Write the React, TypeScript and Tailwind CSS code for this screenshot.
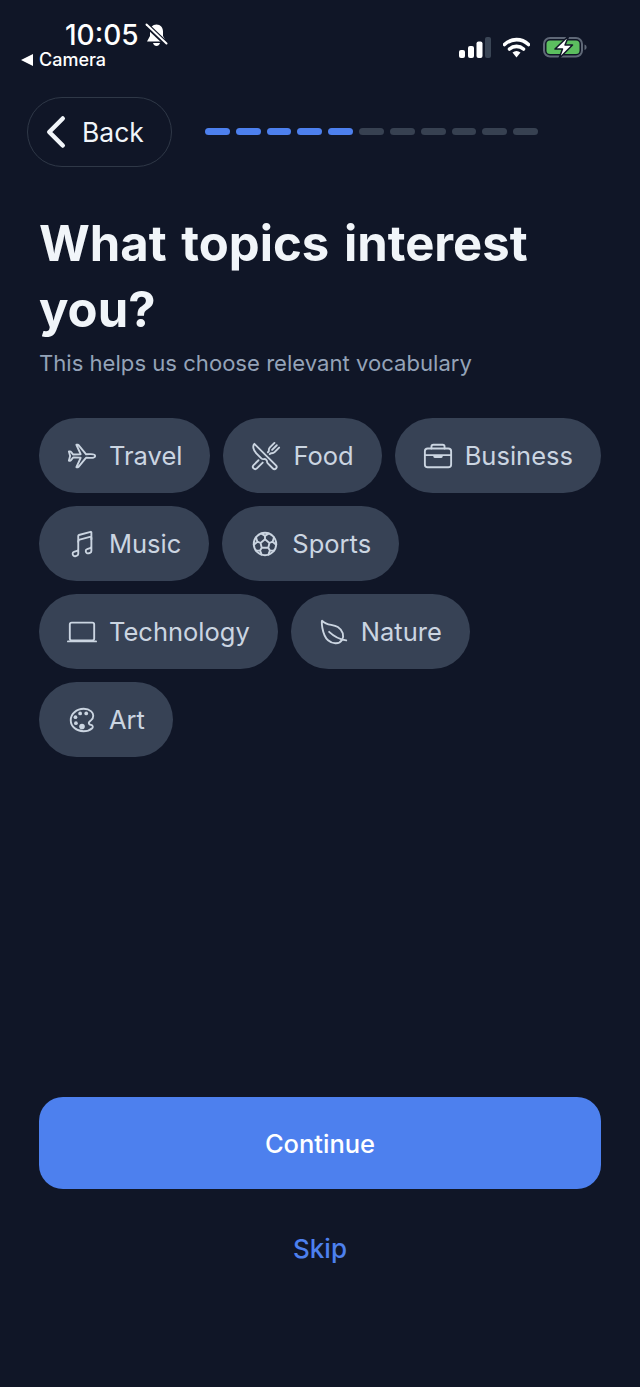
import type { ComponentType } from "react";
import {
  IoAirplaneOutline,
  IoBriefcaseOutline,
  IoChevronBack,
  IoColorPaletteOutline,
  IoFootballOutline,
  IoLaptopOutline,
  IoLeafOutline,
  IoMusicalNotesOutline,
  IoRestaurantOutline,
} from "react-icons/io5";

type Topic = { label: string; icon: ComponentType<{ className?: string }> };

const topics: Topic[] = [
  { label: "Travel", icon: IoAirplaneOutline },
  { label: "Food", icon: IoRestaurantOutline },
  { label: "Business", icon: IoBriefcaseOutline },
  { label: "Music", icon: IoMusicalNotesOutline },
  { label: "Sports", icon: IoFootballOutline },
  { label: "Technology", icon: IoLaptopOutline },
  { label: "Nature", icon: IoLeafOutline },
  { label: "Art", icon: IoColorPaletteOutline },
];

function StatusBar() {
  return (
    <div className="flex h-[97px] items-start justify-between pl-[21px] pr-[53px] pt-[19px]">
      <div className="flex flex-col">
        <div className="flex items-center pl-[44px]">
          <span className="text-[28px] font-medium leading-[32px] text-white">10:05</span>
          <svg className="ml-[6px]" width="23" height="24" viewBox="0 0 23 24" fill="none">
            <path
              d="M11.500 1.500C7.500 1.500 5 4.500 5 8.500V13L2 18.500H21L18 13V8.500C18 4.500 15.500 1.500 11.500 1.500Z"
              fill="#fff"
            />
            <path d="M8 20C8.500 22 10 23 11.500 23C13 23 14.500 22 15 20Z" fill="#fff" />
            <path d="M1 1.500L22 21.500" stroke="#101627" strokeWidth="5" />
            <path d="M1.500 1.500L21.500 20.500" stroke="#fff" strokeWidth="2" strokeLinecap="round" />
          </svg>
        </div>
        <div className="flex items-center">
          <span className="h-0 w-0 border-y-[6px] border-r-[12px] border-y-transparent border-r-white" />
          <span className="ml-[6px] text-[18px] font-medium leading-[18px] text-white">Camera</span>
        </div>
      </div>
      <div className="mt-[16px] flex items-center">
        <svg width="32" height="21" viewBox="0 0 32 21" fill="none">
          <rect x="0" y="13" width="6" height="8" rx="2" fill="#fff" />
          <rect x="9" y="9" width="6" height="12" rx="2" fill="#fff" />
          <rect x="17.500" y="4.500" width="6" height="16.500" rx="2" fill="#fff" />
          <rect x="26" y="0" width="6" height="21" rx="2" fill="#3a4555" />
        </svg>
        <svg className="ml-[12px]" width="27" height="21" viewBox="0 0 27 21" fill="none">
          <path d="M1.500 7.500C8.500 1 18.500 1 25.500 7.500" stroke="#fff" strokeWidth="3.600" strokeLinecap="round" />
          <path d="M6.500 12C10.500 8.500 16.500 8.500 20.500 12" stroke="#fff" strokeWidth="3.600" strokeLinecap="round" />
          <path d="M9.500 15.500C12 13.500 15 13.500 17.500 15.500L13.500 20.500Z" fill="#fff" />
        </svg>
        <svg className="ml-[13px]" width="44" height="24" viewBox="0 0 44 24" fill="none">
          <rect x="1" y="3" width="38" height="18.500" rx="6" stroke="#5f6877" strokeWidth="2" />
          <rect x="3.500" y="5.500" width="33" height="13.500" rx="3.500" fill="#5cbf5f" />
          <path d="M41.500 9.500C43 10 43.500 11 43.500 12.250C43.500 13.500 43 14.500 41.500 15Z" fill="#5f6877" />
          <path
            d="M26 0.500L12 14H19.500L16 23.500L29.500 10H22Z"
            fill="#fff"
            stroke="#101627"
            strokeWidth="1.500"
            strokeLinejoin="round"
          />
        </svg>
      </div>
    </div>
  );
}

export default function App() {
  return (
    <div className="flex min-h-[1387px] flex-col bg-[#101627] font-['Inter',sans-serif]">
      <StatusBar />

      <div className="flex items-center pl-[27px]">
        <button className="flex h-[70px] w-[145px] items-center rounded-[35px] border border-[#2f3847] pl-[4px]">
          <IoChevronBack className="h-[48px] w-[48px] text-[#f1f5f9]" />
          <span className="ml-[2px] text-[26.500px] leading-none text-[#f1f5f9]">Back</span>
        </button>
        <div className="mb-[2px] ml-[33px] flex w-[333px] gap-[6px]">
          {[...Array(11)].map((_, i) => (
            <div
              key={i}
              className={i < 5 ? "h-[7px] flex-1 rounded-full bg-[#4d80ee]" : "h-[7px] flex-1 rounded-full bg-[#374151]"}
            />
          ))}
        </div>
      </div>

      <div className="pl-[39px] pr-[37px]">
        <h1 className="mt-[44px] text-[49px] font-bold leading-[66px] text-[#f1f5f9] [word-spacing:3px]">
          What topics interest you?
        </h1>
        <p className="mt-[5px] text-[22.100px] leading-[30px] text-[#94a3b8]">
          This helps us choose relevant vocabulary
        </p>

        <div className="mt-[40px] flex flex-wrap gap-[13px]">
          {topics.map(({ label, icon: Icon }) => (
            <div
              key={label}
              className="flex h-[75px] items-center rounded-[38px] bg-[#374255] px-[28px]"
            >
              <Icon className="h-[30px] w-[30px] text-[#cbd5e1]" />
              <span className="ml-[12px] pt-[1px] text-[25.500px] leading-none text-[#cbd5e1]">{label}</span>
            </div>
          ))}
        </div>
      </div>

      <div className="mt-auto px-[39px] pb-[120px]">
        <button className="flex h-[92px] w-full items-center justify-center rounded-[24px] bg-[#4d80ee] pt-[3px] text-[25.500px] font-medium text-white">
          Continue
        </button>
        <div className="mt-[42px] text-center text-[26px] font-medium leading-[36px] text-[#4d80ee]">Skip</div>
      </div>
    </div>
  );
}
